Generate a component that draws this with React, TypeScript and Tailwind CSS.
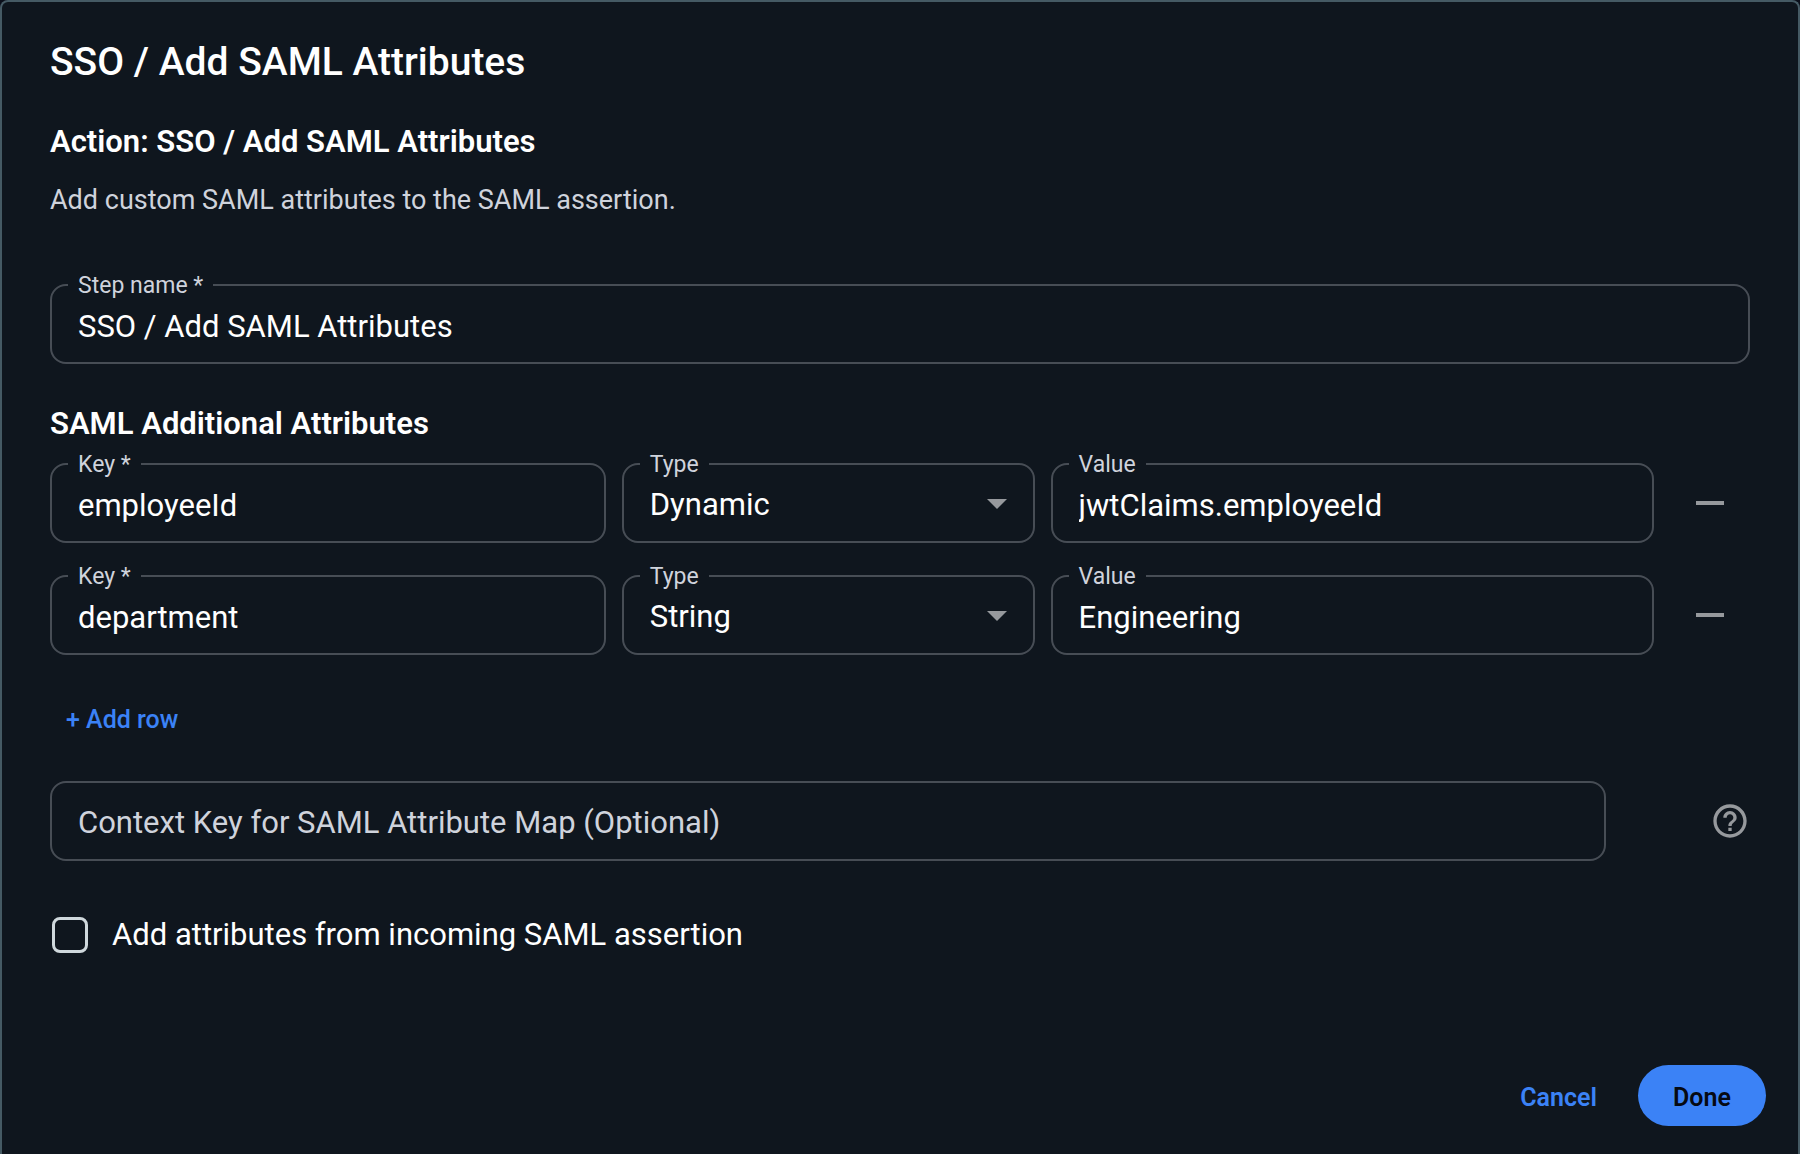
import { useId, useState } from 'react'
import { MdHelpOutline } from 'react-icons/md'

type Attribute = {
  id: number
  key: string
  type: string
  value: string
}

const initialAttributes: Attribute[] = [
  { id: 1, key: 'employeeId', type: 'Dynamic', value: 'jwtClaims.employeeId' },
  { id: 2, key: 'department', type: 'String', value: 'Engineering' },
]

const controlStyles =
  'block h-20 w-full appearance-none rounded-2xl border-2 border-[#474d55] bg-transparent px-[26px] text-[31px] text-white outline-none focus:border-[#3b82f6]'

type FieldProps = {
  label: string
  value: string
  required?: boolean
  onChange: (value: string) => void
}

// Label that sits on top of the outline of a field
function FloatingLabel({ htmlFor, children }: { htmlFor: string; children: React.ReactNode }) {
  return (
    <label
      htmlFor={htmlFor}
      className="absolute -top-3 left-[18px] bg-[#0f161e] px-2.5 text-[23px] leading-7 text-[#cfd3dc]"
    >
      {children}
    </label>
  )
}

function TextField({ label, value, required, onChange }: FieldProps) {
  const id = useId()
  return (
    <div className="relative">
      <input
        id={id}
        type="text"
        value={value}
        required={required}
        onChange={(e) => onChange(e.target.value)}
        className={`${controlStyles} pt-1`}
      />
      <FloatingLabel htmlFor={id}>
        {label}
        {required && ' *'}
      </FloatingLabel>
    </div>
  )
}

function TypeSelect({ label, value, onChange }: FieldProps) {
  const id = useId()
  return (
    <div className="relative">
      <select
        id={id}
        value={value}
        onChange={(e) => onChange(e.target.value)}
        className={`${controlStyles} pt-1`}
      >
        <option className="bg-[#0f161e]">Dynamic</option>
        <option className="bg-[#0f161e]">String</option>
      </select>
      <FloatingLabel htmlFor={id}>{label}</FloatingLabel>
      <svg
        viewBox="0 0 20 10"
        className="pointer-events-none absolute top-9 right-7 h-2.5 w-5 fill-[#96999d]"
        aria-hidden="true"
      >
        <path d="M0 0h20L10 10z" />
      </svg>
    </div>
  )
}

export default function App() {
  const [stepName, setStepName] = useState('SSO / Add SAML Attributes')
  const [attributes, setAttributes] = useState(initialAttributes)
  const [contextKey, setContextKey] = useState('')
  const [useIncoming, setUseIncoming] = useState(false)

  const update = (id: number, patch: Partial<Attribute>) =>
    setAttributes(attributes.map((a) => (a.id === id ? { ...a, ...patch } : a)))

  const addRow = () => setAttributes([...attributes, { id: Date.now(), key: '', type: 'String', value: '' }])

  return (
    <div className="min-h-screen bg-[#0b0f1a] font-[Roboto,sans-serif]">
      <form
        onSubmit={(e) => e.preventDefault()}
        className="flex min-h-screen flex-col rounded-t-lg border-2 border-b-0 border-[#455a64] bg-[#0f161e] pt-9 text-white"
      >
        <div className="px-12">
          <h1 className="text-[39px] leading-12 font-medium">SSO / Add SAML Attributes</h1>
          <h2 className="mt-9 text-[31px] leading-10 font-semibold">Action: SSO / Add SAML Attributes</h2>
          <p className="mt-[18px] mb-16 text-[27px] leading-10 text-[#cfd3dc]">
            Add custom SAML attributes to the SAML assertion.
          </p>

          <TextField label="Step name" required value={stepName} onChange={setStepName} />

          <h2 className="mt-10 mb-[19px] text-[31px] leading-10 font-semibold">SAML Additional Attributes</h2>
          <div className="flex flex-col gap-8">
            {attributes.map((attr) => (
              <div key={attr.id} className="flex items-center gap-4">
                <div className="grid grow grid-cols-[35fr_26fr_38fr] gap-4">
                  <TextField
                    label="Key"
                    required
                    value={attr.key}
                    onChange={(key) => update(attr.id, { key })}
                  />
                  <TypeSelect label="Type" value={attr.type} onChange={(type) => update(attr.id, { type })} />
                  <TextField label="Value" value={attr.value} onChange={(value) => update(attr.id, { value })} />
                </div>
                <button
                  type="button"
                  aria-label="Remove row"
                  onClick={() => setAttributes(attributes.filter((a) => a.id !== attr.id))}
                  className="flex size-20 items-center justify-center"
                >
                  <span className="h-1 w-7 bg-[#96999d]" />
                </button>
              </div>
            ))}
          </div>

          <button
            type="button"
            onClick={addRow}
            className="my-[39px] block h-12 px-4 pt-1 text-[25px] leading-8 font-medium text-[#3b82f6]"
          >
            + Add row
          </button>

          <div className="flex items-center justify-between">
            <input
              type="text"
              aria-label="Context Key for SAML Attribute Map (Optional)"
              placeholder="Context Key for SAML Attribute Map (Optional)"
              value={contextKey}
              onChange={(e) => setContextKey(e.target.value)}
              className={`${controlStyles} mr-26 pt-0.5 placeholder:text-[#cfd3dc] placeholder:opacity-100`}
            />
            <button type="button" aria-label="Help" className="shrink-0 text-[#96999d]">
              <MdHelpOutline className="size-10" />
            </button>
          </div>

          <label className="mt-13 flex w-fit items-center gap-6 pl-0.5 text-[31px] leading-11">
            <input
              type="checkbox"
              checked={useIncoming}
              onChange={(e) => setUseIncoming(e.target.checked)}
              className="size-9 appearance-none rounded-lg border-3 border-[#cfd8dc] checked:bg-[#3b82f6]"
            />
            Add attributes from incoming SAML assertion
          </label>
        </div>

        <div className="mt-auto flex items-center justify-end gap-2 px-8 pt-8 pb-7 text-[25px] leading-8 font-semibold">
          <button type="button" className="h-[61px] px-[33px] pt-1 text-[#3b82f6]">
            Cancel
          </button>
          <button type="submit" className="h-[61px] w-32 rounded-full bg-[#3b82f6] pt-1 text-[#060a12]">
            Done
          </button>
        </div>
      </form>
    </div>
  )
}
